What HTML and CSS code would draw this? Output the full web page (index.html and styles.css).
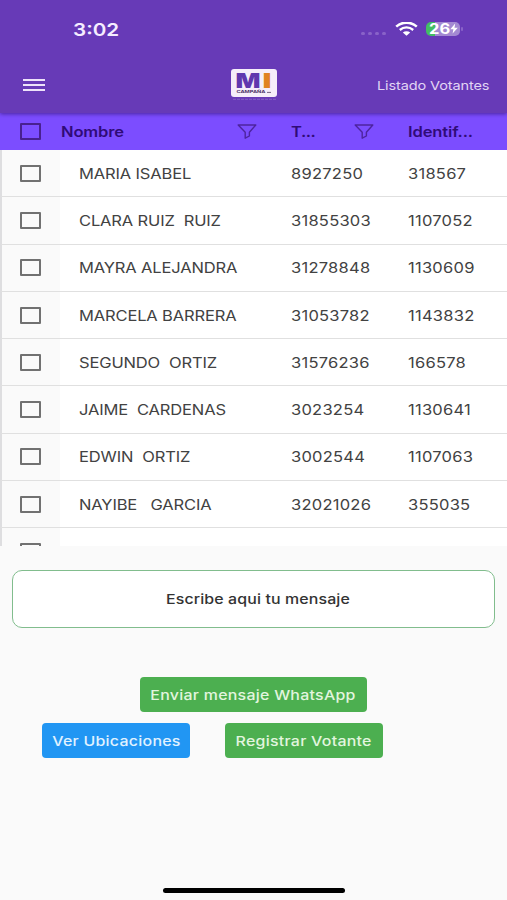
FILE: index.html
```html
<!DOCTYPE html>
<html lang="es">
<head>
<meta charset="UTF-8">
<title>Listado Votantes</title>
<link rel="stylesheet" href="styles.css">
</head>
<body>
    <div class="phone">
        <div class="top">
            <div class="status-bar">
                <span class="time wide">3:02</span>
                <div class="status-icons">
                    <div class="dots"><i></i><i></i><i></i><i></i></div>
                    <svg class="wifi" width="23" height="14" viewBox="0 0 23 14">
                        <path d="M1.2 4.7C7 -.7 16 -.7 21.8 4.7" fill="none" stroke="#fff" stroke-width="2.5"/>
                        <path d="M4.8 8C8.8 4.6 14.2 4.6 18.2 8" fill="none" stroke="#fff" stroke-width="2.3"/>
                        <path d="M7.8 10.4C10 8.8 13 8.8 15.2 10.4L11.5 13.7Z" fill="#fff"/>
                    </svg>
                    <div class="battery">
                        <span class="level wide">26</span>
                        <svg width="8" height="11" viewBox="0 0 8 10"><path d="M5.2 0L.3 5.7H3.4L2.6 10L7.8 4.2H4.5Z" fill="#fff"/></svg>
                    </div>
                    <i class="battery-tip"></i>
                </div>
            </div>
            <div class="app-bar">
                <div class="menu"><i></i><i></i><i></i></div>
                <svg class="logo" width="46" height="32" viewBox="0 0 46 32">
                    <rect width="46" height="28" rx="3" fill="#f5eefa"/>
                    <text class="logo-m" x="4.5" y="19.3" textLength="25" lengthAdjust="spacingAndGlyphs">M</text>
                    <text class="logo-m logo-i" x="31.5" y="19.3" textLength="9" lengthAdjust="spacingAndGlyphs">I</text>
                    <text class="logo-name" x="5.5" y="24" textLength="29" lengthAdjust="spacingAndGlyphs">CAMPAÑA</text>
                    <path d="M36 23.4H40" stroke="#716180" stroke-width="1"/>
                    <path d="M2 30.3H45" stroke="#8160c2" stroke-width="1" stroke-dasharray="3 1"/>
                </svg>
                <span class="title wide">Listado Votantes</span>
            </div>
        </div>

        <div class="table">
            <div class="row head">
                <div class="check"><i class="box"></i></div>
                <div class="name"><span class="wide">Nombre</span><svg class="filter" width="20" height="15" viewBox="0 0 20 15"><path d="M1.2 1H18.8L12.4 8.2V12L8.2 14.2V8.2Z"/></svg></div>
                <div class="phone-number"><span class="wide">T...</span><svg class="filter" width="20" height="15" viewBox="0 0 20 15"><path d="M1.2 1H18.8L12.4 8.2V12L8.2 14.2V8.2Z"/></svg></div>
                <div class="ident"><span class="wide">Identif...</span></div>
            </div>
            <div id="rows"></div>
        </div>

        <div class="message"><span class="wide">Escribe aqui tu mensaje</span></div>

        <div class="buttons">
            <button class="button send"><span class="wide">Enviar mensaje WhatsApp</span></button>
            <div class="button-row">
                <button class="button places"><span class="wide">Ver Ubicaciones</span></button>
                <button class="button register"><span class="wide">Registrar Votante</span></button>
            </div>
        </div>
        <div class="home-bar"></div>
    </div>

    <script>
        const voters = [
            ["MARIA ISABEL", "8927250", "318567"],
            ["CLARA RUIZ  RUIZ", "31855303", "1107052"],
            ["MAYRA ALEJANDRA", "31278848", "1130609"],
            ["MARCELA BARRERA", "31053782", "1143832"],
            ["SEGUNDO  ORTIZ", "31576236", "166578"],
            ["JAIME  CARDENAS", "3023254", "1130641"],
            ["EDWIN  ORTIZ", "3002544", "1107063"],
            ["NAYIBE   GARCIA", "32021026", "355035"],
            ["", "", ""]
        ];

        document.getElementById('rows').innerHTML = voters.map(([name, phone, ident]) => `
            <div class="row">
                <div class="check"><i class="box"></i></div>
                <div class="name"><span class="wide">${name}</span></div>
                <div class="phone-number"><span class="wide">${phone}</span></div>
                <div class="ident"><span class="wide">${ident}</span></div>
            </div>
        `).join('');
    </script>
</body>
</html>
```
FILE: styles.css
```css
* {
    box-sizing: border-box;
}

body {
    margin: 0;
    font-family: Inter, "Liberation Sans", sans-serif;
    background-color: #fafafa;
}

.phone {
    width: 507px;
    height: 900px;
    display: flex;
    flex-direction: column;
    background-color: #fafafa;
    overflow: hidden;
}

/* letras anchas */
.wide {
    display: inline-block;
    transform: scaleX(1.18);
    transform-origin: left center;
    white-space: pre;
}

.top {
    position: relative;
    z-index: 1;
    height: 113px;
    flex: none;
    background-color: #673ab7;
    box-shadow: 0 1px 4px rgba(40, 10, 90, 0.6);
}

.status-bar {
    height: 57px;
    padding: 0 44px 0 73px;
    display: flex;
    justify-content: space-between;
    align-items: center;
    color: #f5edff;
}

.time {
    font-size: 17.5px;
    font-weight: 600;
    margin-top: 2px;
}

.status-icons {
    display: flex;
    align-items: center;
}

.dots {
    display: flex;
    gap: 3px;
    margin: 9px 9px 0 0;
}

.dots i {
    width: 4px;
    height: 3px;
    border-radius: 2px;
    background-color: #8963c8;
}

.wifi {
    margin-right: 8px;
}

.battery {
    width: 34px;
    height: 14px;
    padding-left: 3px;
    border-radius: 5px;
    display: flex;
    align-items: center;
    background: linear-gradient(90deg, #43bd63 27%, #a389d2 27%);
}

.level {
    width: 21px;
    color: #fff;
    font-size: 14px;
    font-weight: 700;
    line-height: 14px;
}

.battery-tip {
    width: 2px;
    height: 4px;
    margin-left: 1px;
    border-radius: 1px;
    background-color: #8963c8;
}

.app-bar {
    height: 56px;
    display: grid;
    grid-template-columns: 231px 146px 1fr;
    align-items: center;
}

.menu {
    width: 22px;
    margin-left: 23px;
    display: flex;
    flex-direction: column;
    gap: 3px;
}

.menu i {
    height: 2px;
    background-color: #eee2fa;
}

.logo-m {
    font-size: 19.5px;
    font-weight: 900;
    fill: #6038ae;
}

.logo-i {
    fill: #e08322;
}

.logo-name {
    font-size: 4px;
    font-weight: 700;
    fill: #493066;
}

.title {
    color: #e1d4f4;
    font-size: 12.3px;
    letter-spacing: -0.1px;
}

.table {
    height: 433px;
    flex: none;
    overflow: hidden;
    background-color: #fff;
}

.row {
    height: 47.3px;
    display: grid;
    grid-template-columns: 58px 231px 117px 1fr;
    color: #424242;
    font-size: 14px;
    letter-spacing: 0.2px;
    border-left: 2px solid #dedee0;
    border-bottom: 1px solid #e0e0e0;
}

.row > div {
    display: flex;
    align-items: center;
}

.row .check {
    padding-left: 18px;
    background-color: #fafafa;
}

.box {
    width: 21px;
    height: 17px;
    border: 2px solid #717171;
    border-radius: 1px;
}

.row .name {
    padding-left: 19px;
    letter-spacing: -0.13px;
}

.head {
    height: 37px;
    padding-left: 2px;
    background-color: #7c4dff;
    color: #300b78;
    font-weight: 600;
    border: none;
}

.row.head .check {
    background: none;
}

.head .box {
    border-color: #48208f;
}

.row.head .name {
    padding-left: 1px;
}

.head .name,
.head .phone-number {
    justify-content: space-between;
    padding-right: 34px;
}

.head .ident {
    letter-spacing: -0.1px;
}

.head .phone-number {
    letter-spacing: -0.4px;
}

.filter {
    fill: none;
    stroke: #4d249f;
    stroke-width: 1.4;
    stroke-linejoin: round;
}

.message {
    height: 58px;
    flex: none;
    margin: 24px 12px 0;
    display: flex;
    justify-content: center;
    align-items: center;
    border: 1px solid #81bd8d;
    border-radius: 10px;
    background-color: #fff;
    color: #333;
    font-size: 13.5px;
    font-weight: 500;
    letter-spacing: 0.1px;
}

.message .wide,
.button .wide {
    transform-origin: center;
}

.message .wide {
    margin-left: 9px;
}

.buttons {
    margin-top: 49px;
}

.button {
    display: flex;
    justify-content: center;
    align-items: center;
    height: 35px;
    padding: 0;
    border: none;
    border-radius: 4px;
    background-color: #4caf50;
    color: #e2f5df;
    font-family: inherit;
    font-size: 13.5px;
    font-weight: 500;
    letter-spacing: 0.22px;
}

.send {
    width: 227px;
    margin-left: 140px;
}

.button-row {
    display: flex;
    gap: 35px;
    margin: 11px 0 0 42px;
}

.places {
    width: 148px;
    background-color: #2196f3;
    color: #e0f2ff;
}

.register {
    width: 158px;
}

.home-bar {
    width: 182px;
    height: 5px;
    margin: auto 0 7px 163px;
    border-radius: 3px;
    background-color: #000;
}
```
